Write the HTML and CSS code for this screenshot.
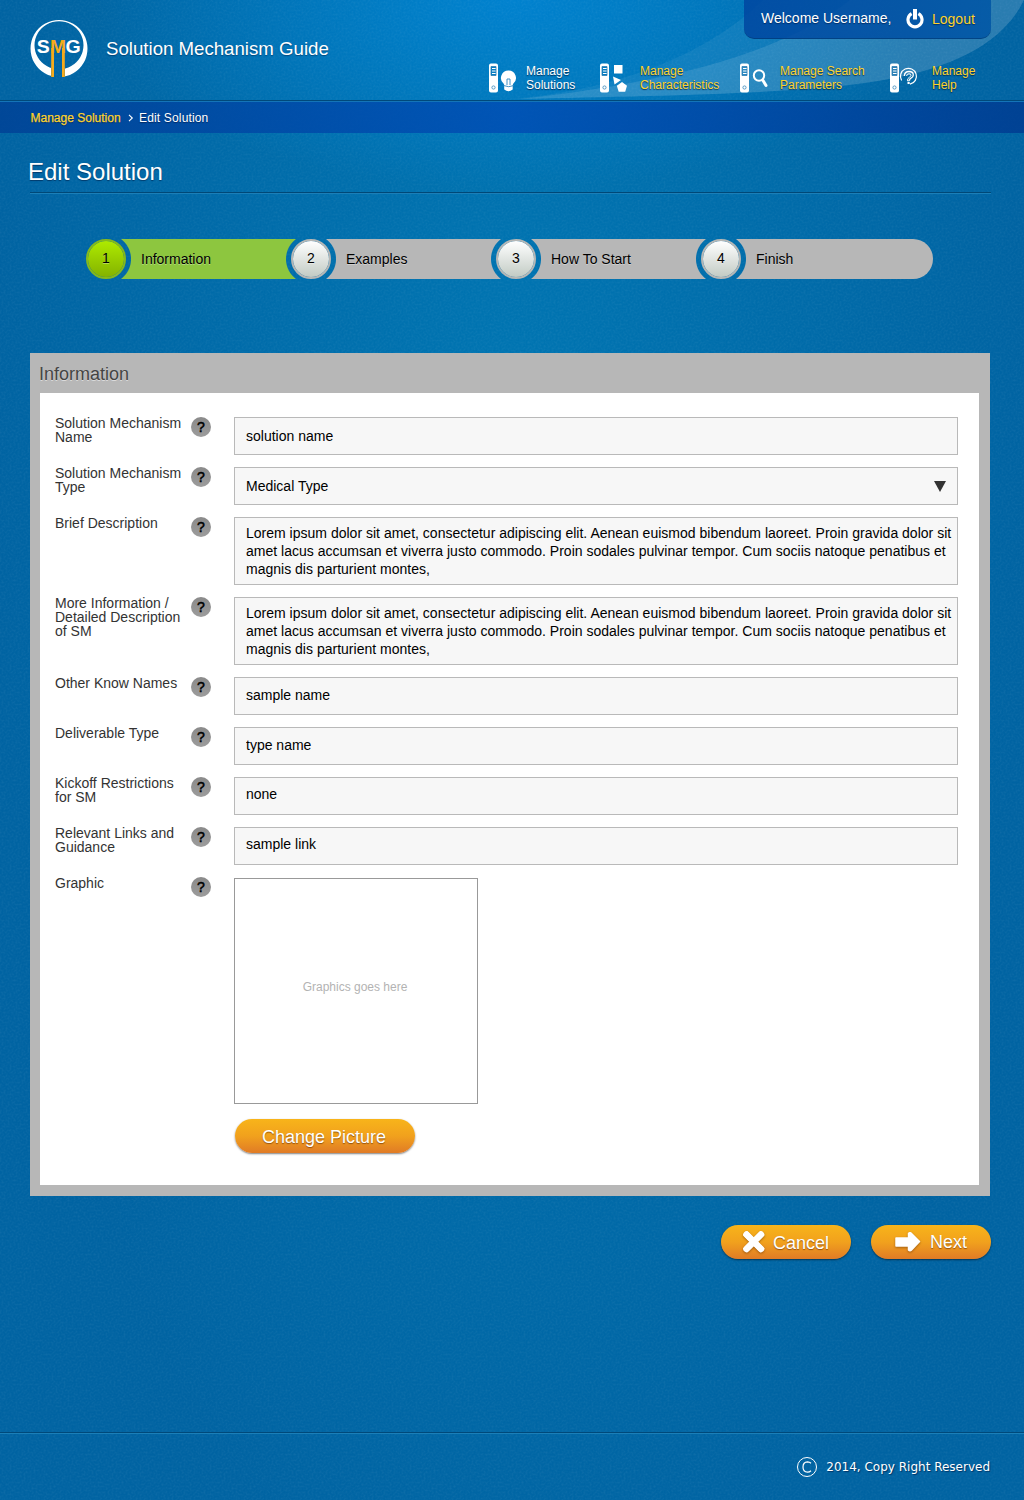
FILE: index.html
```html
<!DOCTYPE html>
<html lang="en">
<head>
<meta charset="utf-8">
<title>Solution Mechanism Guide</title>
<link rel="stylesheet" href="styles.css">
</head>
<body>
<svg class="defs" width="0" height="0" aria-hidden="true">
  <defs>
    <symbol id="remote" viewBox="0 0 10 30">
      <path fill="#fff" fill-rule="evenodd" d="M2 .5h5a2 2 0 0 1 2 2v25a2 2 0 0 1-2 2H2a2 2 0 0 1-2-2v-25a2 2 0 0 1 2-2zM2 3.500v9h5v-9z"/>
      <path stroke="#fff" stroke-width="1" d="M3 5.500h4M3 8h4M3 10.500h4"/>
      <path fill="none" stroke="#2f7fb4" stroke-width=".8" d="M2 3.500h5v9H2z"/>
      <circle cx="4.500" cy="24.500" r="1.600" fill="none" stroke="#4b93c0" stroke-width=".9"/>
    </symbol>
  </defs>
</svg>

<header class="header">
  <svg class="sweep" width="1024" height="100" viewBox="0 0 1024 100" aria-hidden="true">
    <path fill="#fff" fill-opacity=".06" d="M510 99C600 92 700 62 763 0H1024C1000 50 935 78 830 87C740 95 640 96 510 99z"/>
    <path fill="#fff" fill-opacity=".11" d="M520 99C640 86 775 60 850 0H1024C1000 50 935 78 830 87C740 95 640 96 520 99z"/>
  </svg>
  <div class="brand">
    <svg class="logo" width="60" height="60" viewBox="29 19 60 60" role="img">
      <mask id="legs"><rect x="29" y="19" width="60" height="60" fill="#fff"/><rect x="51" y="55" width="14" height="24"/></mask>
      <path mask="url(#legs)" fill="#fff" fill-rule="evenodd" d="M59 20a28.500 28.500 0 1 0 .01 0zM59 21.200a24.500 24 0 1 1-.01 0z"/>
      <g font-family="Liberation Sans, Arial, sans-serif" font-weight="bold" font-size="19">
        <text x="36.800" y="53.200" fill="#fff" textLength="13" lengthAdjust="spacingAndGlyphs">S</text>
        <text x="65.400" y="53.200" fill="#fff" textLength="15.200" lengthAdjust="spacingAndGlyphs">G</text>
        <text x="50" y="53.200" fill="#f6ab1c" textLength="16" lengthAdjust="spacingAndGlyphs">M</text>
      </g>
      <path fill="#f6ab1c" d="M51.200 48h2.800v29h-2.800zM62 48h2.800v29H62z"/>
    </svg>
    <span class="brand-name">Solution Mechanism Guide</span>
  </div>

  <div class="header-side">
    <div class="account">
      <span class="welcome">Welcome Username,</span>
      <a class="logout" href="#">
        <svg width="18" height="20" viewBox="0 0 18 20" fill="none" stroke="#fff" aria-hidden="true">
          <path stroke-width="3.200" d="M5.600 4.700A7 7 0 1 0 12.400 4.700"/>
          <path stroke-width="4" d="M9 0v10.500"/>
        </svg>
        Logout
      </a>
    </div>
    <nav class="nav">
      <a class="nav-item nav-solutions current" href="#">
        <svg width="30" height="30" viewBox="0 0 30 30" aria-hidden="true">
          <use href="#remote" width="10" height="30"/>
          <path fill="#fff" d="M19.500 7.500a7.500 7.500 0 0 1 4.700 13.300l-.5 1.200v4.500q-4.200 3.500-8.500 0V22l-.5-1.200A7.500 7.500 0 0 1 19.500 7.500z"/>
          <path fill="none" stroke="#2c86c0" stroke-width=".9" d="M14.500 22.500q5 2.400 10.500 0M18 22v-6h3v6"/>
        </svg>
        <span>Manage<br>Solutions</span>
      </a>
      <a class="nav-item nav-characteristics" href="#">
        <svg width="30" height="30" viewBox="0 0 30 30" aria-hidden="true">
          <use href="#remote" width="10" height="30"/>
          <path fill="#fff" d="M14 2h8.500v8.500H14zM13 13.500l8 3.500-6.500 4.500zM22 19l5 3.800-1.800 6h-6.500l-1.900-6z"/>
        </svg>
        <span>Manage<br>Characteristics</span>
      </a>
      <a class="nav-item nav-search" href="#">
        <svg width="30" height="30" viewBox="0 0 30 30" aria-hidden="true">
          <use href="#remote" width="10" height="30"/>
          <circle cx="19" cy="12.500" r="5.200" fill="none" stroke="#fff" stroke-width="2"/>
          <path stroke="#fff" stroke-width="3" stroke-linecap="round" d="M23 17.500l3 5"/>
        </svg>
        <span>Manage Search<br>Parameters</span>
      </a>
      <a class="nav-item nav-help" href="#">
        <svg width="30" height="30" viewBox="0 0 30 30" aria-hidden="true">
          <use href="#remote" width="10" height="30"/>
          <g fill="none" stroke="#fff">
            <path stroke-width="1.200" d="M11.600 17.500A8 8 0 1 1 20 21.200"/>
            <path stroke-width="1.300" d="M14.300 13q.3-4.500 4.700-4.500 4.300 0 4.300 3.400 0 2.200-2.300 3.200-1.600.8-1.600 2.700"/>
            <path stroke-width="1" d="M16.600 13q.2-2.200 2.400-2.200 2 0 2 1.500 0 1.100-1.600 1.900-2 1.100-2 3.600h2"/>
            <path stroke-width="2" d="M17.500 20h2.200"/>
          </g>
        </svg>
        <span>Manage<br>Help</span>
      </a>
    </nav>
  </div>
</header>

<div class="breadcrumb">
  <a href="#">Manage Solution</a>
  <svg width="6" height="8" viewBox="0 0 6 8" fill="none" stroke="#fff" stroke-width="1.100" aria-hidden="true"><path d="M1 .8L4.300 4 1 7.200"/></svg>
  <span>Edit Solution</span>
</div>

<main class="main">
  <h1 class="page-title">Edit Solution</h1>

  <ol class="steps">
    <li class="step active"><span class="step-number">1</span>Information</li>
    <li class="step"><span class="step-number">2</span>Examples</li>
    <li class="step"><span class="step-number">3</span>How To Start</li>
    <li class="step last"><span class="step-number">4</span>Finish</li>
  </ol>

  <section class="panel">
    <h2 class="panel-title">Information</h2>
    <form class="form">
      <div class="row">
        <label for="name">Solution Mechanism Name</label><span class="help">?</span>
        <input class="field" id="name" value="solution name">
      </div>
      <div class="row">
        <label>Solution Mechanism Type</label><span class="help">?</span>
        <div class="field select">Medical Type
          <svg width="12" height="11" viewBox="0 0 12 11" aria-hidden="true"><path fill="#333" d="M0 0h12L6 11z"/></svg>
        </div>
      </div>
      <div class="row">
        <label>Brief Description</label><span class="help">?</span>
        <div class="field text">Lorem ipsum dolor sit amet, consectetur adipiscing elit. Aenean euismod bibendum laoreet. Proin gravida dolor sit<br>amet lacus accumsan et viverra justo commodo. Proin sodales pulvinar tempor. Cum sociis natoque penatibus et<br>magnis dis parturient montes,</div>
      </div>
      <div class="row">
        <label>More Information / Detailed Description of SM</label><span class="help">?</span>
        <div class="field text">Lorem ipsum dolor sit amet, consectetur adipiscing elit. Aenean euismod bibendum laoreet. Proin gravida dolor sit<br>amet lacus accumsan et viverra justo commodo. Proin sodales pulvinar tempor. Cum sociis natoque penatibus et<br>magnis dis parturient montes,</div>
      </div>
      <div class="row">
        <label for="other">Other Know Names</label><span class="help">?</span>
        <input class="field raised" id="other" value="sample name">
      </div>
      <div class="row">
        <label for="deliverable">Deliverable Type</label><span class="help">?</span>
        <input class="field raised" id="deliverable" value="type name">
      </div>
      <div class="row">
        <label for="kickoff">Kickoff Restrictions for SM</label><span class="help">?</span>
        <input class="field raised-more" id="kickoff" value="none">
      </div>
      <div class="row">
        <label for="links">Relevant Links and Guidance</label><span class="help">?</span>
        <input class="field raised-more" id="links" value="sample link">
      </div>
      <div class="row">
        <label>Graphic</label><span class="help">?</span>
        <div class="graphic">
          <div class="preview">Graphics goes here</div>
          <button class="button change" type="button">Change Picture</button>
        </div>
      </div>
    </form>
  </section>

  <div class="actions">
    <button class="button cancel" type="button">
      <svg width="24" height="24" viewBox="0 0 24 24" aria-hidden="true"><path stroke="#fff" stroke-width="6" stroke-linejoin="round" d="M3 3l17.500 17.500M20.500 3L3 20.500"/><path stroke="#fff" stroke-width="6.500" stroke-linecap="round" d="M4.500 4.500l14.500 14.500M19 4.500L4.500 19"/></svg>
      <span>Cancel</span>
    </button>
    <button class="button next" type="button">
      <svg width="26" height="20" viewBox="0 0 26 20" aria-hidden="true"><path fill="#fff" stroke="#fff" stroke-width="1.500" stroke-linejoin="round" d="M1 6h12.500V1.500q1.500-1.500 3 0L24.500 9.500l-8 8.500q-1.500 1.500-3 0V14H1z"/></svg>
      <span>Next</span>
    </button>
  </div>
</main>

<footer class="footer">
  <svg width="22" height="22" viewBox="0 0 22 22" fill="none" stroke="#fff" stroke-width="1" aria-hidden="true">
    <circle cx="11" cy="11" r="9.500"/><path stroke-width="1.200" d="M15 7.200Q13.500 5.800 11.500 5.800 7 6 7 11t4.500 5.200q2 0 3.500-1.400"/>
  </svg>
  <span>2014, Copy Right Reserved</span>
</footer>
</body>
</html>
```
FILE: styles.css
```css
* { box-sizing: border-box; }

body {
  margin: 0;
  width: 1024px;
  height: 1500px;
  display: flex;
  flex-direction: column;
  font-family: "Liberation Sans", Arial, sans-serif;
  font-size: 14px;
  color: #fff;
  background:
    url("data:image/svg+xml,%3Csvg xmlns='http://www.w3.org/2000/svg' width='200' height='200'%3E%3Cfilter id='n'%3E%3CfeTurbulence type='fractalNoise' baseFrequency='.5' numOctaves='2' stitchTiles='stitch'/%3E%3CfeColorMatrix values='0 0 0 0 1 0 0 0 0 1 0 0 0 0 1 .5 0 0 0 -.2'/%3E%3C/filter%3E%3Crect width='200' height='200' filter='url(%23n)' opacity='.22'/%3E%3C/svg%3E"),
    radial-gradient(ellipse 420px 190px at 512px 0, rgba(0, 140, 225, .65), rgba(0, 140, 225, 0)),
    radial-gradient(ellipse 520px 1250px at 512px 420px, #0075b2, #0063a2);
}

a { color: #fdd32c; text-decoration: none; }
.defs { position: absolute; }

.header {
  position: relative;
  height: 101px;
  display: flex;
  justify-content: space-between;
  border-bottom: 1px solid #00497a;
}
.sweep { position: absolute; left: 0; top: 0; }
.brand { position: relative; display: flex; align-items: flex-start; padding: 19px 0 0 29px; }
.brand-name { margin: 19px 0 0 17px; font-size: 18.650px; line-height: 22px; text-shadow: 0 1px 1px rgba(0, 30, 70, .5); }

.header-side { position: relative; width: 536px; display: flex; flex-direction: column; }
.account {
  align-self: flex-end;
  width: 247px;
  height: 39px;
  margin-right: 33px;
  padding-left: 17px;
  display: flex;
  border-radius: 0 0 10px 10px;
  background: linear-gradient(90deg, rgba(0, 70, 160, .85), rgba(0, 85, 165, .85));
  border-bottom: 1px solid rgba(0, 55, 110, .6);
  text-shadow: 0 1px 1px rgba(0, 20, 60, .6);
}
.welcome { width: 145px; padding-top: 10px; line-height: 16px; white-space: nowrap; }
.logout { display: flex; gap: 8px; padding-top: 11px; line-height: 16px; }
.logout svg { margin-top: -2px; }

.nav { display: flex; padding-top: 24px; font-size: 12px; line-height: 14px; text-shadow: 0 1px 1px rgba(0, 20, 50, .7); }
.nav-item { display: flex; white-space: nowrap; }
.nav-item span { padding-top: 1px; }
.nav-item.current { color: #fff; }
.nav-solutions { width: 111px; margin-left: 1px; gap: 7px; }
.nav-characteristics { width: 140px; gap: 10px; }
.nav-search { width: 150px; gap: 10px; }
.nav-help { gap: 12px; }

.breadcrumb {
  height: 32px;
  display: flex;
  align-items: center;
  padding-left: 30.500px;
  font-size: 12px;
  border-top: 1px solid #1474b8;
  background: linear-gradient(90deg, rgba(0, 66, 150, .85), rgba(0, 78, 180, .85) 50%, rgba(0, 60, 145, .85));
  text-shadow: 0 1px 1px rgba(0, 20, 60, .6);
}
.breadcrumb a { -webkit-text-stroke: .25px; }
.breadcrumb svg { margin: 0 5px 0 7.500px; }
.breadcrumb span { letter-spacing: .15px; }

.main { padding: 0 33px 0 30px; }
.page-title {
  height: 61px;
  margin: 0;
  padding-top: 25px;
  text-indent: -2px;
  font-weight: normal;
  font-size: 24px;
  line-height: 28px;
  border-bottom: 1px solid #1b7fb8;
  box-shadow: inset 0 -1px #004877;
  text-shadow: 0 1px 1px rgba(0, 30, 70, .6);
}

.steps { height: 40px; margin: 45px 0 0 56px; padding: 0; display: flex; list-style: none; color: #000; }
.step {
  --fill: #b7b7b7;
  flex: none;
  width: 225px;
  margin-right: -20px;
  display: flex;
  align-items: center;
  gap: 15px;
  text-shadow: 0 1px rgba(255, 255, 255, .35);
  background:
    radial-gradient(circle at 0 20px, transparent 24.500px, var(--fill) 25.500px) 20px 0 / 85px 100% no-repeat,
    radial-gradient(circle at 100% 20px, transparent 24.500px, var(--fill) 25.500px) 100% 0 / 121px 100% no-repeat;
}
.step.active { --fill: #8dc63f; }
.step.last {
  width: 232px;
  margin-right: 0;
  border-radius: 20px;
  background: radial-gradient(circle at 0 20px, transparent 24.500px, var(--fill) 25.500px) 20px 0 / 212px 100% no-repeat;
}
.step-number {
  width: 40px;
  height: 40px;
  line-height: 35px;
  text-align: center;
  border: 2.500px solid #b5b7b6;
  border-radius: 50%;
  background: linear-gradient(#fff, #c2cbc4) padding-box;
}
.active .step-number { border-color: #84b81e; background: linear-gradient(#aeea00, #84b200) padding-box; }

.panel {
  width: 960px;
  height: 843px;
  margin-top: 74px;
  padding: 0 11px 11px 10px;
  background: #b7b7b7;
}
.panel-title {
  height: 40px;
  margin: 0 0 0 -1px;
  font-weight: normal;
  font-size: 18px;
  line-height: 43px;
  color: #444;
  text-shadow: 0 1px rgba(255, 255, 255, .5);
}
.form { height: 792px; padding: 24px 21px 0 15px; display: flex; flex-direction: column; gap: 12px; background: #fff; color: #333; }
.row { display: grid; grid-template-columns: 136px 43px 724px; align-items: start; }
.row label { width: 130px; margin-top: -1px; line-height: 14px; }
.help {
  width: 20px;
  height: 20px;
  border-radius: 50%;
  background: linear-gradient(#8a8a8a, #9c9c9c);
  color: #000;
  font-size: 14px;
  -webkit-text-stroke: .5px;
  line-height: 20px;
  text-align: center;
}
.field {
  width: 724px;
  height: 38px;
  margin: 0;
  padding: 0 11px;
  border: 1px solid #b9b9b9;
  background: #f7f7f7;
  font: inherit;
  color: #000;
}
.field.select { display: flex; justify-content: space-between; align-items: center; }
.field.text { height: 68px; padding: 6px 0 0 11px; line-height: 18px; white-space: nowrap; letter-spacing: .008px; }
.field.raised { padding-bottom: 2px; }
.field.raised-more { padding-bottom: 4px; }

.graphic { padding-top: 1px; display: flex; flex-direction: column; align-items: flex-start; }
.preview {
  width: 244px;
  height: 226px;
  display: flex;
  justify-content: center;
  padding: 101px 2px 0 0;
  border: 1px solid #999;
  font-size: 12px;
  color: #b3b3b3;
}

.button {
  height: 34px;
  padding: 0;
  display: flex;
  align-items: center;
  border: 0;
  border-radius: 17px;
  background: linear-gradient(#f8b41a, #f1a11d 50%, #e07b26);
  box-shadow: 0 1px 2px rgba(0, 0, 0, .5);
  font: 18px "Liberation Sans", Arial, sans-serif;
  color: #fff;
  text-shadow: 0 1px 1px rgba(90, 40, 0, .6);
}
.button svg { filter: drop-shadow(0 1px 1px rgba(90, 40, 0, .5)); }
.button.change { width: 180px; margin: 15px 0 0 1px; padding-left: 27px; padding-top: 2px; }
.actions { margin-top: 29px; margin-right: 0; display: flex; justify-content: flex-end; gap: 20px; }
.button.cancel { width: 130px; padding-left: 21px; gap: 7px; }
.button.cancel span { padding-top: 2px; }
.button.next { width: 120px; padding-left: 24px; gap: 9px; }

.footer {
  height: 68px;
  margin-top: auto;
  padding: 0 34px 0 0;
  display: flex;
  justify-content: flex-end;
  align-items: center;
  gap: 8px;
  border-top: 1px solid #00497a;
  box-shadow: inset 0 1px #1b7fb8;
  font: 12px "DejaVu Sans", Verdana, sans-serif;
  text-shadow: 1px 1px 1px rgba(0, 20, 60, .6);
}
```
